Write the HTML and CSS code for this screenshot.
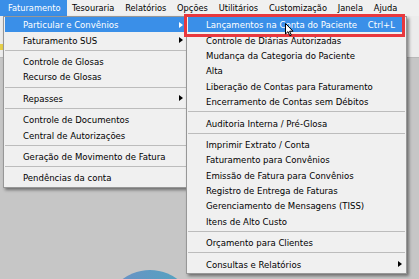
FILE: index.html
```html
<!DOCTYPE html>
<html lang="pt-BR">
<head>
    <meta charset="UTF-8">
    <title>Faturamento</title>
    <link rel="stylesheet" href="styles.css">
</head>
<body>
    <div class="app">
        <div class="menubar">
            <span class="bar-item active">Faturamento</span>
            <span class="bar-item">Tesouraria</span>
            <span class="bar-item">Relatórios</span>
            <span class="bar-item">Opções</span>
            <span class="bar-item">Utilitários</span>
            <span class="bar-item">Customização</span>
            <span class="bar-item">Janela</span>
            <span class="bar-item">Ajuda</span>
        </div>
        <div class="workspace">
            <div class="toolbar"><span class="tool-icon"></span></div>
            <div class="mdi"><div class="logo"></div></div>
        </div>

        <!-- menu Faturamento -->
        <div class="menu menu-main">
            <div class="item hot"><span>Particular e Convênios</span><i class="arrow"></i></div>
            <div class="item"><span>Faturamento SUS</span><i class="arrow"></i></div>
            <div class="sep"></div>
            <div class="item"><span>Controle de Glosas</span></div>
            <div class="item"><span>Recurso de Glosas</span></div>
            <div class="sep"></div>
            <div class="item"><span>Repasses</span><i class="arrow"></i></div>
            <div class="sep"></div>
            <div class="item"><span>Controle de Documentos</span></div>
            <div class="item"><span>Central de Autorizações</span></div>
            <div class="sep"></div>
            <div class="item"><span>Geração de Movimento de Fatura</span></div>
            <div class="sep"></div>
            <div class="item"><span>Pendências da conta</span></div>
        </div>

        <!-- submenu Particular e Convênios -->
        <div class="menu menu-sub">
            <div class="item hot"><span>Lançamentos na Conta do Paciente</span><em class="key">Ctrl+L</em></div>
            <div class="item"><span>Controle de Diárias Autorizadas</span></div>
            <div class="item"><span>Mudança da Categoria do Paciente</span></div>
            <div class="item"><span>Alta</span></div>
            <div class="item"><span>Liberação de Contas para Faturamento</span></div>
            <div class="item"><span>Encerramento de Contas sem Débitos</span></div>
            <div class="sep"></div>
            <div class="item"><span>Auditoria Interna / Pré-Glosa</span></div>
            <div class="sep"></div>
            <div class="item"><span>Imprimir Extrato / Conta</span></div>
            <div class="item"><span>Faturamento para Convênios</span></div>
            <div class="item"><span>Emissão de Fatura para Convênios</span></div>
            <div class="item"><span>Registro de Entrega de Faturas</span></div>
            <div class="item"><span>Gerenciamento de Mensagens (TISS)</span></div>
            <div class="item"><span>Itens de Alto Custo</span></div>
            <div class="sep"></div>
            <div class="item"><span>Orçamento para Clientes</span></div>
            <div class="sep"></div>
            <div class="item"><span>Consultas e Relatórios</span><i class="arrow"></i></div>
        </div>

        <div class="focus-box"></div>
        <svg class="cursor" width="9" height="14" viewBox="0 0 9 14">
            <path d="M0.5 0.5 L0.5 11 L3 8.6 L4.8 12.8 L6.3 12.2 L4.6 8.2 L8 8.2 Z" fill="#fff" stroke="#000" stroke-width="1"/>
        </svg>
    </div>
</body>
</html>
```

FILE: styles.css
```css
body {
    margin: 0;
    overflow: hidden;
    font-family: "DejaVu Sans Condensed", "DejaVu Sans", sans-serif;
    font-size: 9.5px;
    color: #000;
}

.app {
    position: relative;
    width: 419px;
    height: 279px;
    display: flex;
    flex-direction: column;
    background-color: #c6c6c6;
}

/* barra de menus */
.menubar {
    display: flex;
    height: 16px;
    background-color: #f0f0f0;
    font-size: 9.2px;
    white-space: nowrap;
}

.bar-item {
    line-height: 16px;
    padding: 0 5.4px;
}

.bar-item.active {
    padding: 0 6px 0 8px;
    background-color: #3a8fe8;
    color: #fff;
}

/* area de trabalho atras dos menus */
.workspace {
    flex: 1;
    display: flex;
    flex-direction: column;
}

.toolbar {
    height: 42px;
    background-color: #ececec;
    border-bottom: 1px solid #b8b8b8;
    padding: 28px 0 0 0;
    box-sizing: border-box;
}

.tool-icon {
    display: block;
    width: 4px;
    height: 6px;
    background-color: #e6cf4a;
}

.mdi {
    flex: 1;
    position: relative;
    overflow: hidden;
    background-color: #c6c6c6;
}

.logo {
    position: absolute;
    left: 104px;
    top: 212px;
    width: 92px;
    height: 92px;
    border-radius: 50%;
    background: linear-gradient(90deg, #6f8fc6, #4fa6bf);
}

/* menus suspensos */
.menu {
    position: absolute;
    top: 16px;
    background-color: #f0f0f0;
    border: 1px solid #979797;
    box-shadow: 2px 2px 3px rgba(0, 0, 0, 0.45);
    padding: 0 1px 1px 1px;
}

.menu-main {
    left: 3px;
    width: 181px;
}

.menu-sub {
    left: 186px;
    width: 217px;
}

.item {
    display: flex;
    align-items: center;
    height: 15.4px;
    padding: 0 3px 0 18px;
    white-space: nowrap;
}

.item span {
    flex: 1;
}

.item.hot {
    background-color: #3a8fe8;
    color: #fff;
}

.key {
    font-style: normal;
    padding-right: 7px;
}

.arrow {
    width: 0;
    height: 0;
    border-top: 3.5px solid transparent;
    border-bottom: 3.5px solid transparent;
    border-left: 4px solid #000;
}

.item.hot .arrow {
    border-left-color: #fff;
}

.sep {
    height: 1px;
    margin: 2px 0 2px 0;
    border-top: 1px solid #bcbcbc;
}

.focus-box {
    position: absolute;
    left: 184px;
    top: 14px;
    width: 215px;
    height: 17px;
    border: 3px solid #e8383e;
}

.cursor {
    position: absolute;
    left: 285px;
    top: 23px;
}
```
